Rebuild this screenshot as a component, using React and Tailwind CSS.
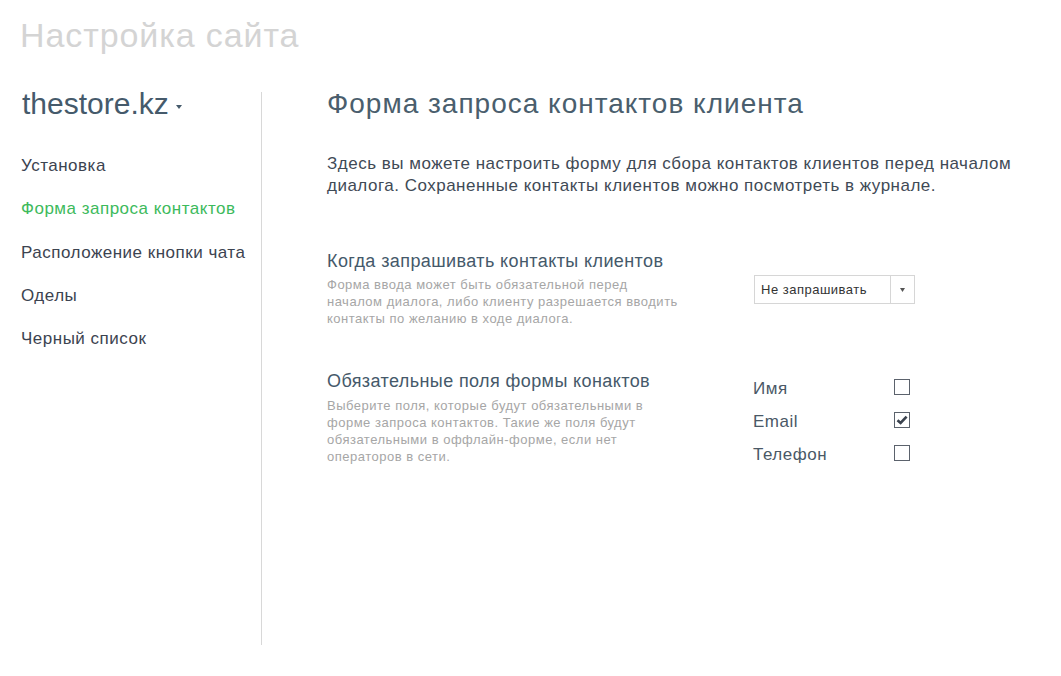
import React, { useState } from 'react';

const navItems = [
  'Установка',
  'Форма запроса контактов',
  'Расположение кнопки чата',
  'Оделы',
  'Черный список',
];

function Checkbox({ checked, onChange }) {
  return (
    <button
      type="button"
      onClick={onChange}
      className="w-[16px] h-[16px] border border-[#5b626c] bg-white flex items-center justify-center"
    >
      {checked && (
        <svg width="12" height="10" viewBox="0 0 12 10">
          <path d="M1.5 5.2 L4.6 8 L10.6 1.6" fill="none" stroke="#3a424e" strokeWidth="2.6" />
        </svg>
      )}
    </button>
  );
}

export default function App() {
  const [active] = useState(1);
  const [fields, setFields] = useState({ name: false, email: true, phone: false });
  const toggle = (k) => setFields((f) => ({ ...f, [k]: !f[k] }));

  return (
    <div className="min-h-screen bg-white px-5 pt-4 font-['Liberation_Sans',Arial,sans-serif]">
      <h1 className="text-[34px] leading-[38px] tracking-[0.9px] text-[#d4d4d4]">Настройка сайта</h1>

      <div className="flex mt-[38px]">
        {/* Боковое меню */}
        <aside className="w-[242px] h-[553px] border-r border-[#d8d8d8] pl-[2px]">
          <div className="flex items-center gap-[6px] text-[30px] leading-[24px] text-[#455a6b]">
            thestore.kz
            <svg width="8" height="6" viewBox="0 0 8 6" className="mt-[6px]">
              <path d="M1 1 L7 1 L4 5 Z" fill="#455a6b" />
            </svg>
          </div>
          <nav className="mt-[40px] flex flex-col gap-[23.25px]">
            {navItems.map((item, i) => (
              <a
                key={item}
                href="#"
                className={`text-[17px] leading-[20px] tracking-[0.5px] -ml-[1px] ${i === active ? 'text-[#3dba5c]' : 'text-[#3c4350]'}`}
              >
                {item}
              </a>
            ))}
          </nav>
        </aside>

        {/* Основной контент */}
        <main className="pl-[65px] flex-1">
          <h2 className="text-[28px] leading-[24px] tracking-[1px] text-[#4a5e6d]">Форма запроса контактов клиента</h2>
          <p className="mt-[37px] w-[700px] text-[17px] leading-[22px] tracking-[0.5px] text-[#3f4a56]">
            Здесь вы можете настроить форму для сбора контактов клиентов перед началом диалога. Сохраненные контакты клиентов можно посмотреть в журнале.
          </p>

          <section className="flex mt-[54px]">
            <div className="w-[427px]">
              <h3 className="text-[18px] leading-[20px] tracking-[0.4px] text-[#45596a]">Когда запрашивать контакты клиентов</h3>
              <p className="mt-[5px] w-[380px] text-[13px] leading-[17px] tracking-[0.5px] text-[#a6a6a6]">
                Форма ввода может быть обязательной перед<br />
                началом диалога, либо клиенту разрешается вводить<br />
                контакты по желанию в ходе диалога.
              </p>
            </div>
            <div className="pt-[24px]">
              <div className="flex w-[161px] h-[29px] border border-[#d6d6d6] bg-white">
                <span className="flex-1 px-[6px] text-[13px] leading-[27px] tracking-[0.5px] text-[#333]">Не запрашивать</span>
                <span className="w-[24px] border-l border-[#d6d6d6] flex items-center justify-center">
                  <svg width="5" height="4" viewBox="0 0 5 4">
                    <path d="M0 0 L5 0 L2.5 4 Z" fill="#555" />
                  </svg>
                </span>
              </div>
            </div>
          </section>

          <section className="flex mt-[44px]">
            <div className="w-[426px]">
              <h3 className="text-[18px] leading-[20px] tracking-[0.4px] text-[#45596a]">Обязательные поля формы конактов</h3>
              <p className="mt-[6px] w-[380px] text-[13px] leading-[17px] tracking-[0.5px] text-[#a6a6a6]">
                Выберите поля, которые будут обязательными в<br />
                форме запроса контактов. Такие же поля будут<br />
                обязательными в оффлайн-форме, если нет<br />
                операторов в сети.
              </p>
            </div>
            <div className="flex flex-col gap-[13px] pt-[6px]">
              {[
                ['name', 'Имя'],
                ['email', 'Email'],
                ['phone', 'Телефон'],
              ].map(([k, label]) => (
                <label key={k} className="flex items-center w-[157px] justify-between h-[20px]">
                  <span className="text-[17px] leading-[20px] tracking-[0.5px] text-[#4a5866] mt-[3px]">{label}</span>
                  <Checkbox checked={fields[k]} onChange={() => toggle(k)} />
                </label>
              ))}
            </div>
          </section>
        </main>
      </div>
    </div>
  );
}
